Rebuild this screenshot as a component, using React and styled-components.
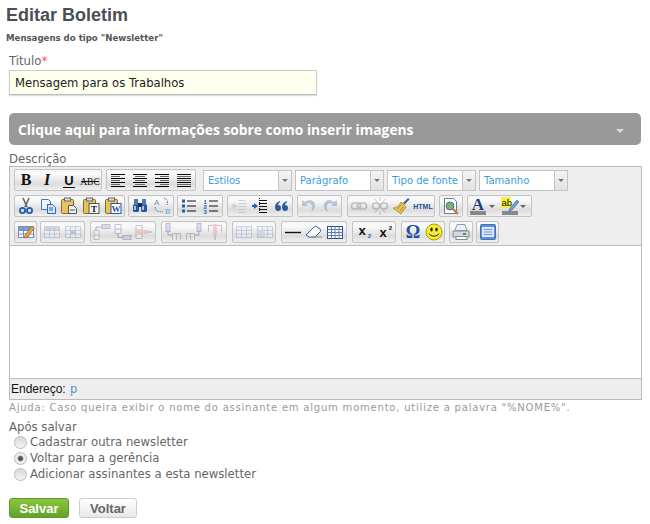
import styled, { createGlobalStyle } from "styled-components";

const GlobalStyle = createGlobalStyle`
  body {
    margin: 0;
    background: #fff;
    font-family: "DejaVu Sans", Verdana, sans-serif;
    font-size: 11.7px;
    color: #666;
  }
`;

const Page = styled.div`
  width: 650px;
  height: 524px;
  overflow: hidden;
  box-sizing: border-box;
  padding: 6px 8px 0 9px;
`;
const Title = styled.h1`
  margin: 0 0 0 -3px;
  font: bold 18px/18px "Liberation Sans", Arial, sans-serif;
  color: #4a4f55;
`;
const Subtitle = styled.div`
  margin: 8px 0 0 -3px;
  font: bold 8.6px/12px "DejaVu Sans", Verdana, sans-serif;
  color: #555;
`;
const FieldLabel = styled.label`
  display: block;
  line-height: 14px;
  color: #666;
`;
const TitleLabel = styled(FieldLabel)`
  margin-top: 10px;
`;
const Required = styled.span`
  color: #f55;
`;
const TextInput = styled.input`
  display: block;
  box-sizing: border-box;
  width: 308px;
  height: 25px;
  margin-top: 2px;
  padding: 0 5px;
  border: 1px solid #ccc;
  border-bottom-color: #bbb;
  box-shadow: 0 1px 1px #ddd;
  background: #ffffee;
  font: 11.6px "DejaVu Sans", Verdana, sans-serif;
  color: #222;
`;
const Accordion = styled.div`
  display: flex;
  align-items: center;
  justify-content: space-between;
  box-sizing: border-box;
  width: 632px;
  height: 32px;
  margin-top: 18px;
  padding: 0 17px 0 9px;
  border-radius: 5px;
  background: #999;
  font: bold 13.8px "Open Sans", sans-serif;
  color: #fff;
`;
const Caret = styled.span`
  width: 0;
  height: 0;
  margin-top: 3px;
  border-left: 4px solid transparent;
  border-right: 4px solid transparent;
  border-top: 4px solid #ddd;
`;
const DescLabel = styled(FieldLabel)`
  margin-top: 7px;
`;
const Editor = styled.div`
  box-sizing: border-box;
  width: 633px;
  height: 234px;
  display: flex;
  flex-direction: column;
  border: 1px solid #bbb;
`;
const Toolbars = styled.div`
  height: 79px;
  flex: none;
  box-sizing: border-box;
  padding: 2px 4px 0;
  background: #eee;
  border-bottom: 1px solid #bbb;
  display: flex;
  flex-direction: column;
  gap: 4px;
`;
const ToolRow = styled.div`
  display: flex;
  gap: 3px;
  height: 22px;
`;
const Group = styled.div`
  display: flex;
  align-items: center;
  flex: none;
  box-sizing: border-box;
  width: ${(p) => p.$w}px;
  height: 22px;
  margin-left: ${(p) => p.$ml || 0}px;
  border: 1px solid #c4c4c4;
  border-radius: 2px;
  background: linear-gradient(#f6f6f6, #fafafa 20%, #dcdcdc 70%, #f0f0f0);
`;
const ToolButton = styled.span`
  display: flex;
  align-items: center;
  justify-content: center;
  flex: 1;
  height: 20px;
  opacity: ${(p) => (p.$off ? 0.35 : 1)};
  svg {
    display: block;
  }
`;
const Selects = styled.div`
  display: flex;
  gap: 3px;
  margin-left: 4px;
`;
const Select = styled.div`
  display: flex;
  flex: none;
  box-sizing: border-box;
  width: 89px;
  height: 21px;
  margin-top: 1px;
  border: 1px solid #c4c4c4;
  background: #fff;
`;
const SelectText = styled.span`
  flex: 1;
  padding-left: 4px;
  font-size: 10px;
  line-height: 19px;
  color: #3a9bd5;
`;
const SelectArrow = styled.span`
  display: flex;
  align-items: center;
  justify-content: center;
  width: 12px;
  border-left: 1px solid #c4c4c4;
  background: linear-gradient(#f4f4f4, #e2e2e2);
  &::after {
    content: "";
    border-left: 3.5px solid transparent;
    border-right: 3.5px solid transparent;
    border-top: 3.5px solid #777;
  }
`;
const EditArea = styled.div`
  flex: 1;
  background: #fff;
`;
const StatusBar = styled.div`
  height: 21px;
  flex: none;
  box-sizing: border-box;
  padding-left: 1px;
  border-top: 1px solid #bbb;
  background: #eee;
  font: 12px/20px "Liberation Sans", Arial, sans-serif;
  color: #111;
`;
const PathLink = styled.span`
  margin-left: 1px;
  color: #5a8fc8;
  font-family: "DejaVu Sans", sans-serif;
  font-size: 11.5px;
`;
const Help = styled.div`
  margin-top: 1px;
  font-size: 10px;
  line-height: 14px;
  letter-spacing: 0.79px;
  color: #999;
`;
const AfterLabel = styled(FieldLabel)`
  margin-top: 5px;
`;
const RadioList = styled.div`
  display: flex;
  flex-direction: column;
  padding-left: 5px;
`;
const RadioRow = styled.label`
  display: flex;
  align-items: center;
  gap: 3px;
  height: 16px;
  color: #666;
`;
const Radio = styled.input`
  appearance: none;
  box-sizing: border-box;
  width: 13px;
  height: 13px;
  margin: 1px 0 0;
  border: 1px solid #bbb;
  border-radius: 50%;
  background: ${(p) =>
    p.defaultChecked
      ? "radial-gradient(circle, #555 0 2px, #aaa 2.6px, #eee 3.4px)"
      : "linear-gradient(#d8d8d8, #f4f4f4)"};
`;
const Actions = styled.div`
  display: flex;
  gap: 10px;
  margin-top: 16px;
`;
const ActionButton = styled.button`
  box-sizing: border-box;
  height: 20px;
  padding: 0;
  width: ${(p) => p.$w}px;
  border-radius: 3px;
  border: 1px solid ${(p) => (p.$primary ? "#5f9a2a" : "#ccc")};
  background: ${(p) =>
    p.$primary
      ? "linear-gradient(#8cc63f, #62a32a)"
      : "linear-gradient(#fff, #e8e8e8)"};
  color: ${(p) => (p.$primary ? "#fff" : "#666")};
  font: bold 13px "Liberation Sans", Arial, sans-serif;
`;

const Letter = ({ children, family = "Liberation Serif", size = 16, italic, under, strike, weight = "bold" }) => (
  <svg width="20" height="20" viewBox="0 0 20 20">
    <text
      x="10"
      y="15"
      textAnchor="middle"
      fontFamily={family}
      fontSize={size}
      fontWeight={weight}
      fontStyle={italic ? "italic" : "normal"}
      fill="#111"
    >
      {children}
    </text>
    {under && <path d="M4 17.5h12" stroke="#111" />}
    {strike && <path d="M1 11.5h18" stroke="#111" />}
  </svg>
);

const Lines = ({ rows }) => (
  <svg width="20" height="20" viewBox="0 0 20 20">
    {rows.map(([a, b], i) => (
      <path key={i} d={`M${a} ${4.5 + i * 2}H${b}`} stroke={i % 2 ? "#666" : "#000"} />
    ))}
  </svg>
);

const S = ({ children }) => (
  <svg width="20" height="20" viewBox="0 0 20 20">
    {children}
  </svg>
);

const clip = (
  <>
    <rect x="2.5" y="3.5" width="12" height="14" rx="1" fill="#e8c35a" stroke="#8a6a20" />
    <rect x="5.5" y="2" width="6" height="3" fill="#ddd" stroke="#666" />
  </>
);
const grid = (fill) => (
  <>
    <rect x="2.5" y="4.5" width="15" height="11" fill="#fff" stroke="#6f8fbf" />
    <rect x="3" y="5" width="14" height="3" fill={fill} />
    <path d="M2.5 8.5h15M2.5 12h15M7.5 4.5v11M12.5 4.5v11" stroke="#6f8fbf" />
  </>
);

const ICONS = {
  bold: <Letter>B</Letter>,
  italic: <Letter italic>I</Letter>,
  underline: <Letter size={13} under family="Liberation Sans">U</Letter>,
  strike: <Letter size={9.5} strike family="Liberation Serif" weight="normal">ABC</Letter>,
  left: <Lines rows={[[3,17],[3,12],[3,17],[3,12],[3,17],[3,12],[3,17]]} />,
  center: <Lines rows={[[3,17],[5,15],[3,17],[5,15],[3,17],[5,15],[3,17]]} />,
  right: <Lines rows={[[3,17],[8,17],[3,17],[8,17],[3,17],[8,17],[3,17]]} />,
  justify: <Lines rows={[[3,17],[3,17],[3,17],[3,17],[3,17],[3,17],[3,17]]} />,
  cut: (
    <S>
      <path d="M7 2l4 9M13 2l-4 9" stroke="#667" strokeWidth="1.6" />
      <circle cx="6.5" cy="14.5" r="2.6" fill="none" stroke="#1f5fb0" strokeWidth="1.8" />
      <circle cx="13.5" cy="14.5" r="2.6" fill="none" stroke="#1f5fb0" strokeWidth="1.8" />
    </S>
  ),
  copy: (
    <S>
      <path d="M3.5 3.5h7l2 2v3h-3v5h-6z" fill="#eef4fc" stroke="#3f78c0" />
      <path d="M9.5 8.5h5l3 3v6h-8z" fill="#d5e4f8" stroke="#2f68b0" />
      <path d="M11 12h4M11 14h4" stroke="#2f68b0" />
    </S>
  ),
  paste: (
    <S>
      {clip}
      <path d="M9.5 9.5h5l3 3v5h-8z" fill="#eee" stroke="#555" />
      <path d="M11 14h5" stroke="#555" />
    </S>
  ),
  pasteText: (
    <S>
      {clip}
      <rect x="8" y="7.5" width="10" height="10" fill="#f4f4f4" stroke="#555" />
      <text x="13" y="16" textAnchor="middle" fontSize="9" fontWeight="bold" fontFamily="Liberation Serif" fill="#111">T</text>
    </S>
  ),
  pasteWord: (
    <S>
      {clip}
      <rect x="8" y="7.5" width="10" height="10" fill="#fff" stroke="#2a55a8" />
      <text x="13" y="16" textAnchor="middle" fontSize="9" fontWeight="bold" fontFamily="Liberation Serif" fill="#2a55a8">W</text>
    </S>
  ),
  find: (
    <S>
      <rect x="3" y="8" width="6" height="8" rx="1.5" fill="#2a5598" />
      <rect x="11" y="8" width="6" height="8" rx="1.5" fill="#2a5598" />
      <rect x="4" y="3" width="4" height="6" fill="#5078b8" />
      <rect x="12" y="3" width="4" height="6" fill="#5078b8" />
      <rect x="8" y="7" width="4" height="4" fill="#13305f" />
      <path d="M5 10v4M13 10v4" stroke="#dfeafa" strokeWidth="1.4" />
    </S>
  ),
  replace: (
    <S>
      <text x="2" y="9" fontSize="8" fontFamily="Liberation Sans" fill="#7b93b8">A</text>
      <text x="13" y="18" fontSize="8" fontFamily="Liberation Sans" fill="#6aa0e0">B</text>
      <path d="M12 2c4 1 4 5 3 7M3 11c0 4 3 5 8 5" fill="none" stroke="#2f78d0" strokeDasharray="1.5 1" />
    </S>
  ),
  bullist: (
    <S>
      <rect x="3" y="3.5" width="3" height="3" fill="#2a5a9a" />
      <rect x="3" y="8.5" width="3" height="3" fill="#2a5a9a" />
      <rect x="3" y="13.5" width="3" height="3" fill="#2a5a9a" />
      <path d="M8 5h9M8 10h9M8 15h9" stroke="#111" />
    </S>
  ),
  numlist: (
    <S>
      <text x="2.5" y="8" fontSize="6" fontWeight="bold" fontFamily="Liberation Sans" fill="#2a5a9a">1</text>
      <text x="2.5" y="13" fontSize="6" fontWeight="bold" fontFamily="Liberation Sans" fill="#2a5a9a">2</text>
      <text x="2.5" y="18" fontSize="6" fontWeight="bold" fontFamily="Liberation Sans" fill="#2a5a9a">3</text>
      <path d="M8 5h9M8 10h9M8 15h9" stroke="#111" />
    </S>
  ),
  outdent: (
    <S>
      <path d="M9 4.5h8M9 7.5h8M9 10.5h8M9 13.5h8M9 16.5h8" stroke="#999" />
      <path d="M2 10l4-3v2h2v2H6v2z" fill="#7fa8d8" />
    </S>
  ),
  indent: (
    <S>
      <path d="M9 4.5h8M9 7.5h8M9 10.5h8M9 13.5h8M9 16.5h8" stroke="#111" />
      <path d="M8 10L4 7v2H2v2h2v2z" fill="#1f5fc0" />
      <path d="M9.5 2v16" stroke="#111" strokeDasharray="1 1" />
    </S>
  ),
  quote: (
    <S>
      <path d="M9 5c-3 1-5 3-5 6 0 2 1 4 3 4s3-1 3-3-1-3-3-3c0-1 1-2 2-3zM16 5c-3 1-5 3-5 6 0 2 1 4 3 4s3-1 3-3-1-3-3-3c0-1 1-2 2-3z" fill="#2a5a9a" />
    </S>
  ),
  undo: (
    <S>
      <path d="M3 4v6h6L7 8c3-2 7 0 6 5l-1 3c5-3 5-9 2-11-3-2-6-1-8 1z" fill="#4a78b8" />
    </S>
  ),
  redo: (
    <S>
      <path d="M17 4v6h-6l2-2c-3-2-7 0-6 5l1 3c-5-3-5-9-2-11 3-2 6-1 8 1z" fill="#4a78b8" />
    </S>
  ),
  link: (
    <S>
      <rect x="2.5" y="7" width="9" height="6" rx="3" fill="none" stroke="#667" strokeWidth="1.6" />
      <rect x="8.5" y="7" width="9" height="6" rx="3" fill="none" stroke="#667" strokeWidth="1.6" />
    </S>
  ),
  unlink: (
    <S>
      <rect x="2.5" y="7" width="7" height="6" rx="3" fill="none" stroke="#667" strokeWidth="1.6" />
      <rect x="10.5" y="7" width="7" height="6" rx="3" fill="none" stroke="#667" strokeWidth="1.6" />
      <path d="M10 1v4M10 15v4M5 3l2 3M15 3l-2 3M5 17l2-3M15 17l-2-3" stroke="#778" />
    </S>
  ),
  broom: (
    <S>
      <path d="M12 7l5-5 1.5 1.5-5 5z" fill="#3a5f9f" />
      <path d="M10 6l5 5-5 7-8-6c3 0 6-2 8-6z" fill="#e6c24a" stroke="#8a6f20" strokeWidth="0.6" />
      <path d="M6 13l4-4M9 15l3-4" stroke="#9a7a20" strokeWidth="0.7" />
    </S>
  ),
  html: (
    <svg width="22" height="20" viewBox="0 0 22 20">
      <text x="11" y="13" textAnchor="middle" fontSize="7" fontWeight="bold" fontFamily="Liberation Sans" fill="#1f4f90">HTML</text>
    </svg>
  ),
  preview: (
    <S>
      <path d="M3.5 2.5h9l3 3v12h-12z" fill="#fff" stroke="#778" />
      <circle cx="9" cy="10" r="4" fill="#7fb06f" stroke="#4a6fa8" />
      <path d="M12 13l5 5" stroke="#c08030" strokeWidth="2.4" />
    </S>
  ),
  forecolor: (
    <S>
      <text x="10" y="14" textAnchor="middle" fontSize="17" fontWeight="bold" fontFamily="Liberation Serif" fill="#1f3f80">A</text>
      <rect x="2" y="15" width="16" height="4" fill="#888" />
    </S>
  ),
  backcolor: (
    <S>
      <rect x="1" y="1" width="10" height="11" fill="#f4f040" />
      <text x="1.5" y="10" fontSize="9.5" fontFamily="Liberation Sans" fill="#111">ab</text>
      <path d="M10 12l7-8 2 2-7 8-3 1z" fill="#6f9fd8" stroke="#3a5f9f" strokeWidth="0.6" />
      <rect x="2" y="15" width="16" height="4" fill="#888" />
    </S>
  ),
  tableEdit: (
    <S>
      {grid("#7f9fd0")}
      <path d="M9 13l7-9 2.5 2-7 9-3 1z" fill="#e8a040" stroke="#8a5a20" strokeWidth="0.6" />
    </S>
  ),
  rowProps: <S>{grid("#7f9fd0")}</S>,
  cellProps: (
    <S>
      {grid("#e4ecf8")}
      <rect x="8" y="8.5" width="4.5" height="3.5" fill="#5f7fc0" />
    </S>
  ),
  rowBefore: (
    <S>
      <path d="M2 8.5h5v9H2zM2 13h5" fill="#fff" stroke="#667" />
      <rect x="10" y="2.5" width="8" height="4" fill="#8fb0e0" stroke="#557" />
      <path d="M4 5h6M4 5v3" stroke="#333" />
    </S>
  ),
  rowAfter: (
    <S>
      <path d="M2 2.5h6v9H2zM2 7h6" fill="#fff" stroke="#667" />
      <rect x="10" y="13.5" width="8" height="4" fill="#8fb0e0" stroke="#557" />
      <path d="M5 12v3.5h5" fill="none" stroke="#333" />
    </S>
  ),
  rowDelete: (
    <S>
      <path d="M2 3.5h6v13H2zM2 8h6M2 12h6" fill="#fff" stroke="#667" />
      <rect x="2" y="8" width="11" height="4" fill="#e88" />
      <path d="M13 10h5" stroke="#333" />
    </S>
  ),
  colBefore: (
    <S>
      <rect x="3" y="1.5" width="4" height="8" fill="#8fb0e0" stroke="#557" />
      <path d="M5 9.5V13h4" fill="none" stroke="#333" />
      <path d="M9.5 11.5h8v7M13.5 11.5v7M9.5 11.5v7" fill="none" stroke="#667" />
    </S>
  ),
  colAfter: (
    <S>
      <rect x="13" y="1.5" width="4" height="8" fill="#8fb0e0" stroke="#557" />
      <path d="M15 9.5V13h-4" fill="none" stroke="#333" />
      <path d="M2.5 11.5h8v7M6.5 11.5v7M2.5 11.5v7" fill="none" stroke="#667" />
    </S>
  ),
  colDelete: (
    <S>
      <path d="M3.5 3.5h13M3.5 3.5v6M16.5 3.5v6" fill="none" stroke="#667" />
      <rect x="8" y="2" width="4" height="11" fill="#e88" />
      <path d="M10 13v5" stroke="#333" />
    </S>
  ),
  split: <S>{grid("#e4ecf8")}</S>,
  merge: (
    <S>
      {grid("#e4ecf8")}
      <rect x="3" y="8.5" width="7" height="6.5" fill="#a8c0e8" />
    </S>
  ),
  hr: (
    <S>
      <path d="M2 10.5h16" stroke="#111" strokeWidth="1.4" />
    </S>
  ),
  eraser: (
    <S>
      <path d="M2 13l8-8c1-1 2-1 3 0l3 2c1 1 1 2 0 3l-5 5H5z" fill="#fff" stroke="#2a5a9a" />
      <path d="M9 15H18" stroke="#888" />
    </S>
  ),
  visualAid: (
    <S>
      <rect x="2.5" y="4.5" width="15" height="12" fill="#fff" stroke="#2a4a80" />
      <path d="M2.5 7.5h15M2.5 10.5h15M2.5 13.5h15M6.5 4.5v12M10 4.5v12M14 4.5v12" stroke="#5a80b8" />
    </S>
  ),
  sub: (
    <S>
      <text x="8" y="13" textAnchor="middle" fontSize="13" fontWeight="bold" fontFamily="Liberation Sans" fill="#111">x</text>
      <text x="15.5" y="16" textAnchor="middle" fontSize="6" fontWeight="bold" fontFamily="Liberation Sans" fill="#1f5fc0">2</text>
    </S>
  ),
  sup: (
    <S>
      <text x="8" y="15" textAnchor="middle" fontSize="13" fontWeight="bold" fontFamily="Liberation Sans" fill="#111">x</text>
      <text x="15.5" y="8" textAnchor="middle" fontSize="6" fontWeight="bold" fontFamily="Liberation Sans" fill="#111">2</text>
    </S>
  ),
  omega: (
    <S>
      <text x="10" y="16" textAnchor="middle" fontSize="18" fontWeight="bold" fontFamily="Liberation Serif" fill="#1f4f9f">Ω</text>
    </S>
  ),
  smile: (
    <S>
      <circle cx="10" cy="10" r="8" fill="#f6ee30" stroke="#b09a10" />
      <ellipse cx="7.5" cy="7.5" rx="1.2" ry="2" fill="#222" />
      <ellipse cx="12.5" cy="7.5" rx="1.2" ry="2" fill="#222" />
      <path d="M5 11.5c1.5 3.5 8.5 3.5 10 0" fill="none" stroke="#222" />
    </S>
  ),
  print: (
    <S>
      <path d="M6 2.5h8l2 6H4z" fill="#eef" stroke="#99a" />
      <path d="M2 9h16v6H2z" fill="#d4d8de" stroke="#889" />
      <rect x="12" y="11" width="3" height="2" fill="#22aa33" />
      <rect x="5" y="14.5" width="11" height="3" fill="#fff" stroke="#889" />
    </S>
  ),
  fullscreen: (
    <S>
      <rect x="2.5" y="2.5" width="15" height="15" rx="1" fill="#5f8fe0" stroke="#4a70b0" />
      <rect x="4" y="5" width="12" height="10" fill="#dbe7fa" />
      <path d="M6 7.5h8M6 10h8M6 12.5h8" stroke="#6f9ae0" />
    </S>
  ),
};

const Arrow = styled.span`
  flex: none;
  width: 0;
  height: 0;
  margin-right: 5px;
  border-left: 3px solid transparent;
  border-right: 3px solid transparent;
  border-top: 3px solid #666;
`;

const row1 = [
  { w: 88, items: ["bold", "italic", "underline", "strike"] },
  { w: 90, ml: 1, items: ["left", "center", "right", "justify"] },
];
const selects = ["Estilos", "Parágrafo", "Tipo de fonte", "Tamanho"];
const row2 = [
  { w: 111, items: ["cut", "copy", "paste", "pasteText", "pasteWord"] },
  { w: 46, items: ["find", "replace"] },
  { w: 46, items: ["bullist", "numlist"] },
  { w: 66, ml: 1, items: ["outdent", "indent", "quote"], off: ["outdent"] },
  { w: 45, ml: 1, items: ["undo", "redo"], off: ["undo", "redo"] },
  { w: 88, ml: 2, items: ["link", "unlink", "broom", "html"], off: ["link", "unlink"] },
  { w: 24, ml: 1, items: ["preview"] },
  { w: 65, ml: 1, items: ["forecolor", "@", "backcolor", "@"] },
];
const row3 = [
  { w: 23, items: ["tableEdit"] },
  { w: 45, items: ["rowProps", "cellProps"], off: ["rowProps", "cellProps"] },
  { w: 66, ml: 2, items: ["rowBefore", "rowAfter", "rowDelete"], off: ["rowBefore", "rowAfter", "rowDelete"] },
  { w: 66, ml: 2, items: ["colBefore", "colAfter", "colDelete"], off: ["colBefore", "colAfter", "colDelete"] },
  { w: 44, ml: 2, items: ["split", "merge"], off: ["split", "merge"] },
  { w: 66, ml: 2, items: ["hr", "eraser", "visualAid"] },
  { w: 44, ml: 2, items: ["sub", "sup"] },
  { w: 44, ml: 2, items: ["omega", "smile"] },
  { w: 24, ml: 1, items: ["print"] },
  { w: 23, items: ["fullscreen"] },
];

const Groups = ({ groups }) =>
  groups.map((g, i) => (
    <Group key={i} $w={g.w} $ml={g.ml}>
      {g.items.map((name, j) =>
        name === "@" ? (
          <Arrow key={j} />
        ) : (
          <ToolButton key={j} $off={g.off && g.off.includes(name)}>
            {ICONS[name]}
          </ToolButton>
        )
      )}
    </Group>
  ));

const options = [
  { label: "Cadastrar outra newsletter" },
  { label: "Voltar para a gerência", checked: true },
  { label: "Adicionar assinantes a esta newsletter" },
];

const App = () => (
  <Page>
    <GlobalStyle />
    <Title>Editar Boletim</Title>
    <Subtitle>Mensagens do tipo "Newsletter"</Subtitle>
    <TitleLabel>
      Titulo<Required>*</Required>
    </TitleLabel>
    <TextInput defaultValue="Mensagem para os Trabalhos" />
    <Accordion>
      Clique aqui para informações sobre como inserir imagens
      <Caret />
    </Accordion>
    <DescLabel>Descrição</DescLabel>
    <Editor>
      <Toolbars>
        <ToolRow>
          <Groups groups={row1} />
          <Selects>
            {selects.map((s) => (
              <Select key={s}>
                <SelectText>{s}</SelectText>
                <SelectArrow />
              </Select>
            ))}
          </Selects>
        </ToolRow>
        <ToolRow>
          <Groups groups={row2} />
        </ToolRow>
        <ToolRow>
          <Groups groups={row3} />
        </ToolRow>
      </Toolbars>
      <EditArea />
      <StatusBar>
        Endereço: <PathLink>p</PathLink>
      </StatusBar>
    </Editor>
    <Help>Ajuda: Caso queira exibir o nome do assinante em algum momento, utilize a palavra "%NOME%".</Help>
    <AfterLabel>Após salvar</AfterLabel>
    <RadioList>
      {options.map((o) => (
        <RadioRow key={o.label}>
          <Radio type="radio" name="after" defaultChecked={o.checked} />
          {o.label}
        </RadioRow>
      ))}
    </RadioList>
    <Actions>
      <ActionButton $primary $w={60}>Salvar</ActionButton>
      <ActionButton $w={58}>Voltar</ActionButton>
    </Actions>
  </Page>
);

export default App;
